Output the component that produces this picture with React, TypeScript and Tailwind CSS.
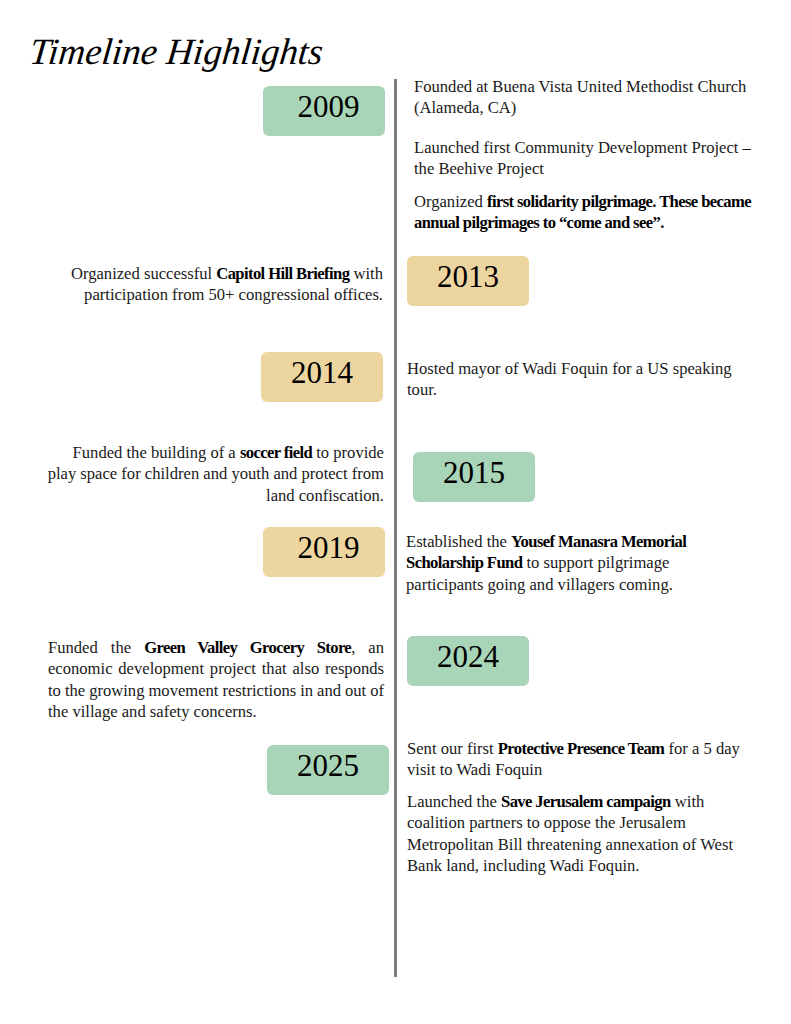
import type { ReactNode } from "react";

type Tone = "green" | "tan";

const toneClasses: Record<Tone, string> = {
  green: "bg-[#a8d4b8]",
  tan: "bg-[#edd5a0]",
};

function YearBox({ year, tone, className = "" }: { year: string; tone: Tone; className?: string }) {
  return (
    <div
      className={`flex h-[50px] w-[122px] items-center justify-center rounded-[6px] pb-[9px] text-[31px] leading-none text-black ${toneClasses[tone]} ${className}`}
    >
      {year}
    </div>
  );
}

function B({ children }: { children: ReactNode }) {
  return <b className="font-bold tracking-[-0.6px] text-black">{children}</b>;
}

function Row({
  left,
  right,
  height,
  lineClass = "",
}: {
  left: ReactNode;
  right: ReactNode;
  height: string;
  lineClass?: string;
}) {
  return (
    <div className={`grid grid-cols-[394px_3px_1fr] ${height}`}>
      <div className="flex flex-col">{left}</div>
      <div className={`bg-[#7d7d7d] ${lineClass}`} />
      <div className="flex flex-col">{right}</div>
    </div>
  );
}

export default function App() {
  return (
    <div className="min-h-[1024px] w-[791px] bg-white font-['Liberation_Serif',serif] text-[16.6px] leading-[21.4px] text-[#1a1a1a]">
      {/* TITLE */}
      <div className="h-[76px] pl-[30px] pt-[33px]">
        <h1 className="-skew-x-6 text-[37px] italic leading-none text-black">Timeline Highlights</h1>
      </div>

      {/* 2009 */}
      <Row
        height="h-[174px]"
        lineClass="mt-[3px]"
        left={<YearBox year="2009" tone="green" className="ml-auto mr-[9px] mt-[10px] pl-[9px]" />}
        right={
          <div className="pl-[17px] pr-[36px]">
            <p>Founded at Buena Vista United Methodist Church (Alameda, CA)</p>
            <p className="mt-[18px]">Launched first Community Development Project – the Beehive Project</p>
            <p className="mt-[11px]">
              Organized <B>first solidarity pilgrimage. These became annual pilgrimages to “come and see”.</B>
            </p>
          </div>
        }
      />

      {/* 2013 */}
      <Row
        height="h-[95px]"
        left={
          <p className="pl-[48px] pr-[11px] pt-[13px] text-right">
            Organized successful <B>Capitol Hill Briefing</B> with participation from 50+ congressional offices.
          </p>
        }
        right={<YearBox year="2013" tone="tan" className="ml-[10px] mt-[6px]" />}
      />

      {/* 2014 */}
      <Row
        height="h-[95px]"
        left={<YearBox year="2014" tone="tan" className="ml-auto mr-[11px] mt-[7px]" />}
        right={
          <p className="pl-[10px] pr-[36px] pt-[13px]">Hosted mayor of Wadi Foquin for a US speaking tour.</p>
        }
      />

      {/* 2015 */}
      <Row
        height="h-[80px]"
        left={
          <p className="pl-[44px] pr-[10px] pt-[2px] text-right">
            Funded the building of a <B>soccer field</B> to provide play space for children and youth and protect
            from land confiscation.
          </p>
        }
        right={<YearBox year="2015" tone="green" className="ml-[16px] mt-[12px]" />}
      />

      {/* 2019 */}
      <Row
        height="h-[110px]"
        left={<YearBox year="2019" tone="tan" className="ml-auto mr-[9px] mt-[7px] pl-[9px]" />}
        right={
          <p className="pl-[9px] pr-[44px] pt-[11px]">
            Established the <B>Yousef Manasra Memorial Scholarship Fund</B> to support pilgrimage participants going
            and villagers coming.
          </p>
        }
      />

      {/* 2024 */}
      <Row
        height="h-[105px]"
        left={
          <p className="pl-[48px] pr-[10px] pt-[7px] text-justify [word-spacing:-1.5px]">
            <span className="block [text-align-last:justify]">
              Funded the <B>Green Valley Grocery Store</B>, an
            </span>
            <span className="block [text-align-last:justify]">economic development project that also responds</span>
            <span className="block [text-align-last:justify]">to the growing movement restrictions in and out of</span>
            <span className="block [word-spacing:0px]">the village and safety concerns.</span>
          </p>
        }
        right={<YearBox year="2024" tone="green" className="ml-[10px] mt-[6px]" />}
      />

      {/* 2025 */}
      <Row
        height="h-[242px]"
        left={<YearBox year="2025" tone="green" className="ml-auto mr-[5px] mt-[10px]" />}
        right={
          <div className="pl-[10px] pr-[36px] pt-[3px]">
            <p>
              Sent our first <B>Protective Presence Team</B> for a 5 day visit to Wadi Foquin
            </p>
            <p className="mt-[10px]">
              Launched the <B>Save Jerusalem campaign</B> with coalition partners to oppose the Jerusalem
              Metropolitan Bill threatening annexation of West Bank land, including Wadi Foquin.
            </p>
          </div>
        }
      />
    </div>
  );
}
